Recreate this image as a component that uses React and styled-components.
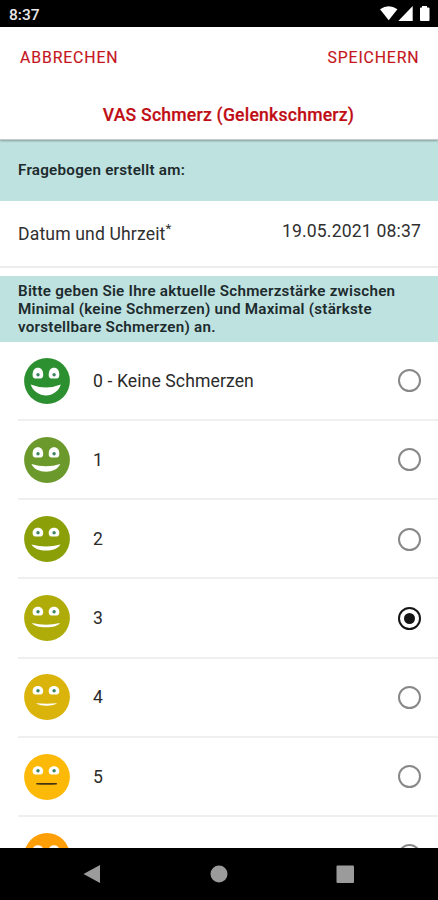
import React, { useState } from 'react';
import styled, { createGlobalStyle } from 'styled-components';

const GlobalStyle = createGlobalStyle`
  * {
    box-sizing: border-box;
  }
  body {
    margin: 0;
    background: #fff;
    font-family: Roboto, sans-serif;
  }
`;

const Screen = styled.div`
  display: flex;
  flex-direction: column;
  width: 438px;
  height: 900px;
  overflow: hidden;
  background: #fff;
`;

const StatusBar = styled.div`
  flex: none;
  display: flex;
  justify-content: space-between;
  height: 27px;
  padding: 6px 8px 0 9px;
  background: #000;
  color: #e8e8e8;
  font-size: 15.5px;
  font-weight: 500;
  line-height: 18px;
  svg {
    display: block;
    fill: #fff;
  }
`;

const Header = styled.header`
  flex: none;
  height: 113px;
  position: relative;
  border-bottom: 1px solid #c4caca;
  box-shadow: 0 1px 2px rgba(0, 0, 0, 0.3);
`;

const Toolbar = styled.div`
  display: flex;
  justify-content: space-between;
  align-items: center;
  height: 62px;
  padding: 0 18.5px 0 20px;
`;

const TextButton = styled.button`
  padding: 0;
  border: 0;
  background: none;
  color: #c4161c;
  font-family: inherit;
  font-size: 15.8px;
  letter-spacing: 0.88px;
  line-height: 20px;
  -webkit-text-stroke: 0.15px #c4161c;
`;

const Title = styled.h1`
  margin: 0;
  padding: 14px 0 0 19px;
  color: #c00d14;
  font-size: 17.6px;
  font-weight: 500;
  line-height: 24px;
  text-align: center;
  letter-spacing: 0.22px;
  -webkit-text-stroke: 0.2px #c00d14;
`;

const Content = styled.main`
  flex: 1;
  min-height: 0;
  overflow: hidden;
`;

const SectionTitle = styled.h2`
  display: flex;
  align-items: center;
  height: ${props => props.$height}px;
  margin: 0;
  padding: 0 18px;
  background: #bee2e0;
  color: #1d2b2d;
  font-size: 15.2px;
  font-weight: 600;
  line-height: 18.3px;
  letter-spacing: 0.24px;
`;

const DateRow = styled.div`
  display: flex;
  justify-content: space-between;
  height: 67px;
  margin-bottom: 8px;
  padding: 19px 17px 0 18px;
  border-bottom: 2px solid #ececec;
  color: #303030;
  font-size: 17.6px;
  line-height: 22px;
`;

const DateLabel = styled.span`
  padding-top: 3px;
  letter-spacing: 0.14px;
  sup {
    font-size: 13.5px;
    line-height: 0;
    vertical-align: 7.5px;
  }
`;

const DateValue = styled.span`
  letter-spacing: 0.16px;
`;

const Option = styled.label`
  display: flex;
  align-items: center;
  height: 79.15px;
  margin-left: 18px;
  padding: 0.5px 17px 0 6px;
  border-bottom: 2px solid #efefef;
  color: #2b2b2b;
  font-size: 17.6px;
  letter-spacing: 0.1px;
  cursor: pointer;
  input {
    display: none;
  }
`;

const FaceIcon = styled.svg`
  flex: none;
  width: 46px;
  height: 46px;
`;

const OptionText = styled.span`
  flex: 1;
  padding-left: 23px;
`;

const Radio = styled.span`
  flex: none;
  display: flex;
  align-items: center;
  justify-content: center;
  width: 23px;
  height: 23px;
  border: 2px solid ${props => (props.$checked ? '#151515' : '#888')};
  border-radius: 50%;
  &::after {
    content: '';
    width: 11px;
    height: 11px;
    border-radius: 50%;
    background: ${props => (props.$checked ? '#151515' : 'transparent')};
  }
`;

const NavBar = styled.nav`
  flex: none;
  height: 52px;
  background: #000;
  svg {
    display: block;
    fill: #9b9b9b;
  }
`;

const LEVELS = [
  { label: '0 - Keine Schmerzen', color: '#2c8f30', eyeTop: 9.8, mouth: 'M6.7 26.5Q22 32.5 36.8 26.5C34.5 33.5 28.5 37.4 22 37.4S9 33.5 6.7 26.5Z' },
  { label: '1', color: '#6c992b', eyeTop: 10.3, mouth: 'M7.5 27Q22 31.5 36.3 27C34 32 28.5 34.7 22 34.7S9.5 32 7.5 27Z' },
  { label: '2', color: '#8b9f08', eyeTop: 11.8, mouth: 'M7.5 28.4Q22 32.6 36.5 28.4C34 32.7 28 34.6 22 34.6S10 32.7 7.5 28.4Z' },
  { label: '3', color: '#afac0a', eyeTop: 11.8, mouth: 'M8 28Q22 31.4 36 28C34.5 30.8 29 32.3 22 32.3S9.5 30.8 8 28Z' },
  { label: '4', color: '#dab40a', eyeTop: 12, mouth: 'M12 29.3Q22.5 30.2 33.3 29.3C31 31 27.5 31.7 22.5 31.7S14 31 12 29.3Z' },
  { label: '5', color: '#fcb907', eyeTop: 12.2, mouth: 'M12.5 29.1Q22.5 28.8 32.7 29.1Q33.4 29.9 32.7 30.5Q22.500 31.1 12.5 30.5Q11.8 29.8 12.5 29.1Z', dark: true },
  { label: '', color: '#ff9f08', eyeTop: 12.2, mouth: 'M12 31Q22.5 28 33 31Q22.5 30 12 31Z', dark: true },
];

const eyePath = (cx, top) =>
  `M${cx - 2.6} 20.6Q${cx - 5.3} 20.3 ${cx - 5.3} 17C${cx - 5.3} ${top + 2.2} ${cx - 3.2} ${top} ${cx} ${top}S${cx + 5.3} ${top + 2.2} ${cx + 5.3} 17Q${cx + 5.3} 20.3 ${cx + 2.6} 20.6Z`;

function Face({ level }) {
  return (
    <FaceIcon viewBox="0 0 46 46">
      <circle cx="23" cy="23" r="22.9" fill={level.color} />
      {[13.9, 30].map(cx => (
        <g key={cx}>
          <path d={eyePath(cx, level.eyeTop)} fill="#fff" />
          <circle cx={cx + 0.1} cy="16.8" r="1.7" fill="#3d8463" />
        </g>
      ))}
      <path d={level.mouth} fill={level.dark ? '#443512' : '#fff'} />
    </FaceIcon>
  );
}

function App() {
  const [selected, setSelected] = useState(3);

  return (
    <Screen>
      <GlobalStyle />
      <StatusBar>
        <span>8:37</span>
        <svg width="50" height="16" viewBox="0 0 50 16">
          <path d="M0 3.2Q8.7-2.8 17.4 3.2L8.7 14.3Z" />
          <path d="M32.7 0V15H18.3Z" />
          <path d="M42 1.5V0h5v1.5h1.5q1 0 1 1V14q0 1-1 1h-7.5q-1 0-1-1V2.5q0-1 1-1Z" />
        </svg>
      </StatusBar>
      <Header>
        <Toolbar>
          <TextButton>ABBRECHEN</TextButton>
          <TextButton>SPEICHERN</TextButton>
        </Toolbar>
        <Title>VAS Schmerz (Gelenkschmerz)</Title>
      </Header>
      <Content>
        <SectionTitle $height={61}>Fragebogen erstellt am:</SectionTitle>
        <DateRow>
          <DateLabel>Datum und Uhrzeit<sup>*</sup></DateLabel>
          <DateValue>19.05.2021 08:37</DateValue>
        </DateRow>
        <SectionTitle $height={66}>
          Bitte geben Sie Ihre aktuelle Schmerzstärke zwischen
          <br />
          Minimal (keine Schmerzen) und Maximal (stärkste
          <br />
          vorstellbare Schmerzen) an.
        </SectionTitle>
        {LEVELS.map((level, i) => (
          <Option key={i}>
            <input type="radio" name="pain" checked={selected === i} onChange={() => setSelected(i)} />
            <Face level={level} />
            <OptionText>{level.label}</OptionText>
            <Radio $checked={selected === i} />
          </Option>
        ))}
      </Content>
      <NavBar>
        <svg width="438" height="52" viewBox="0 0 438 52">
          <path d="M83.5 26L100 17V35Z" />
          <circle cx="219" cy="26" r="8.5" />
          <rect x="336.5" y="17.5" width="17.5" height="17.5" rx="1" />
        </svg>
      </NavBar>
    </Screen>
  );
}

export default App;
